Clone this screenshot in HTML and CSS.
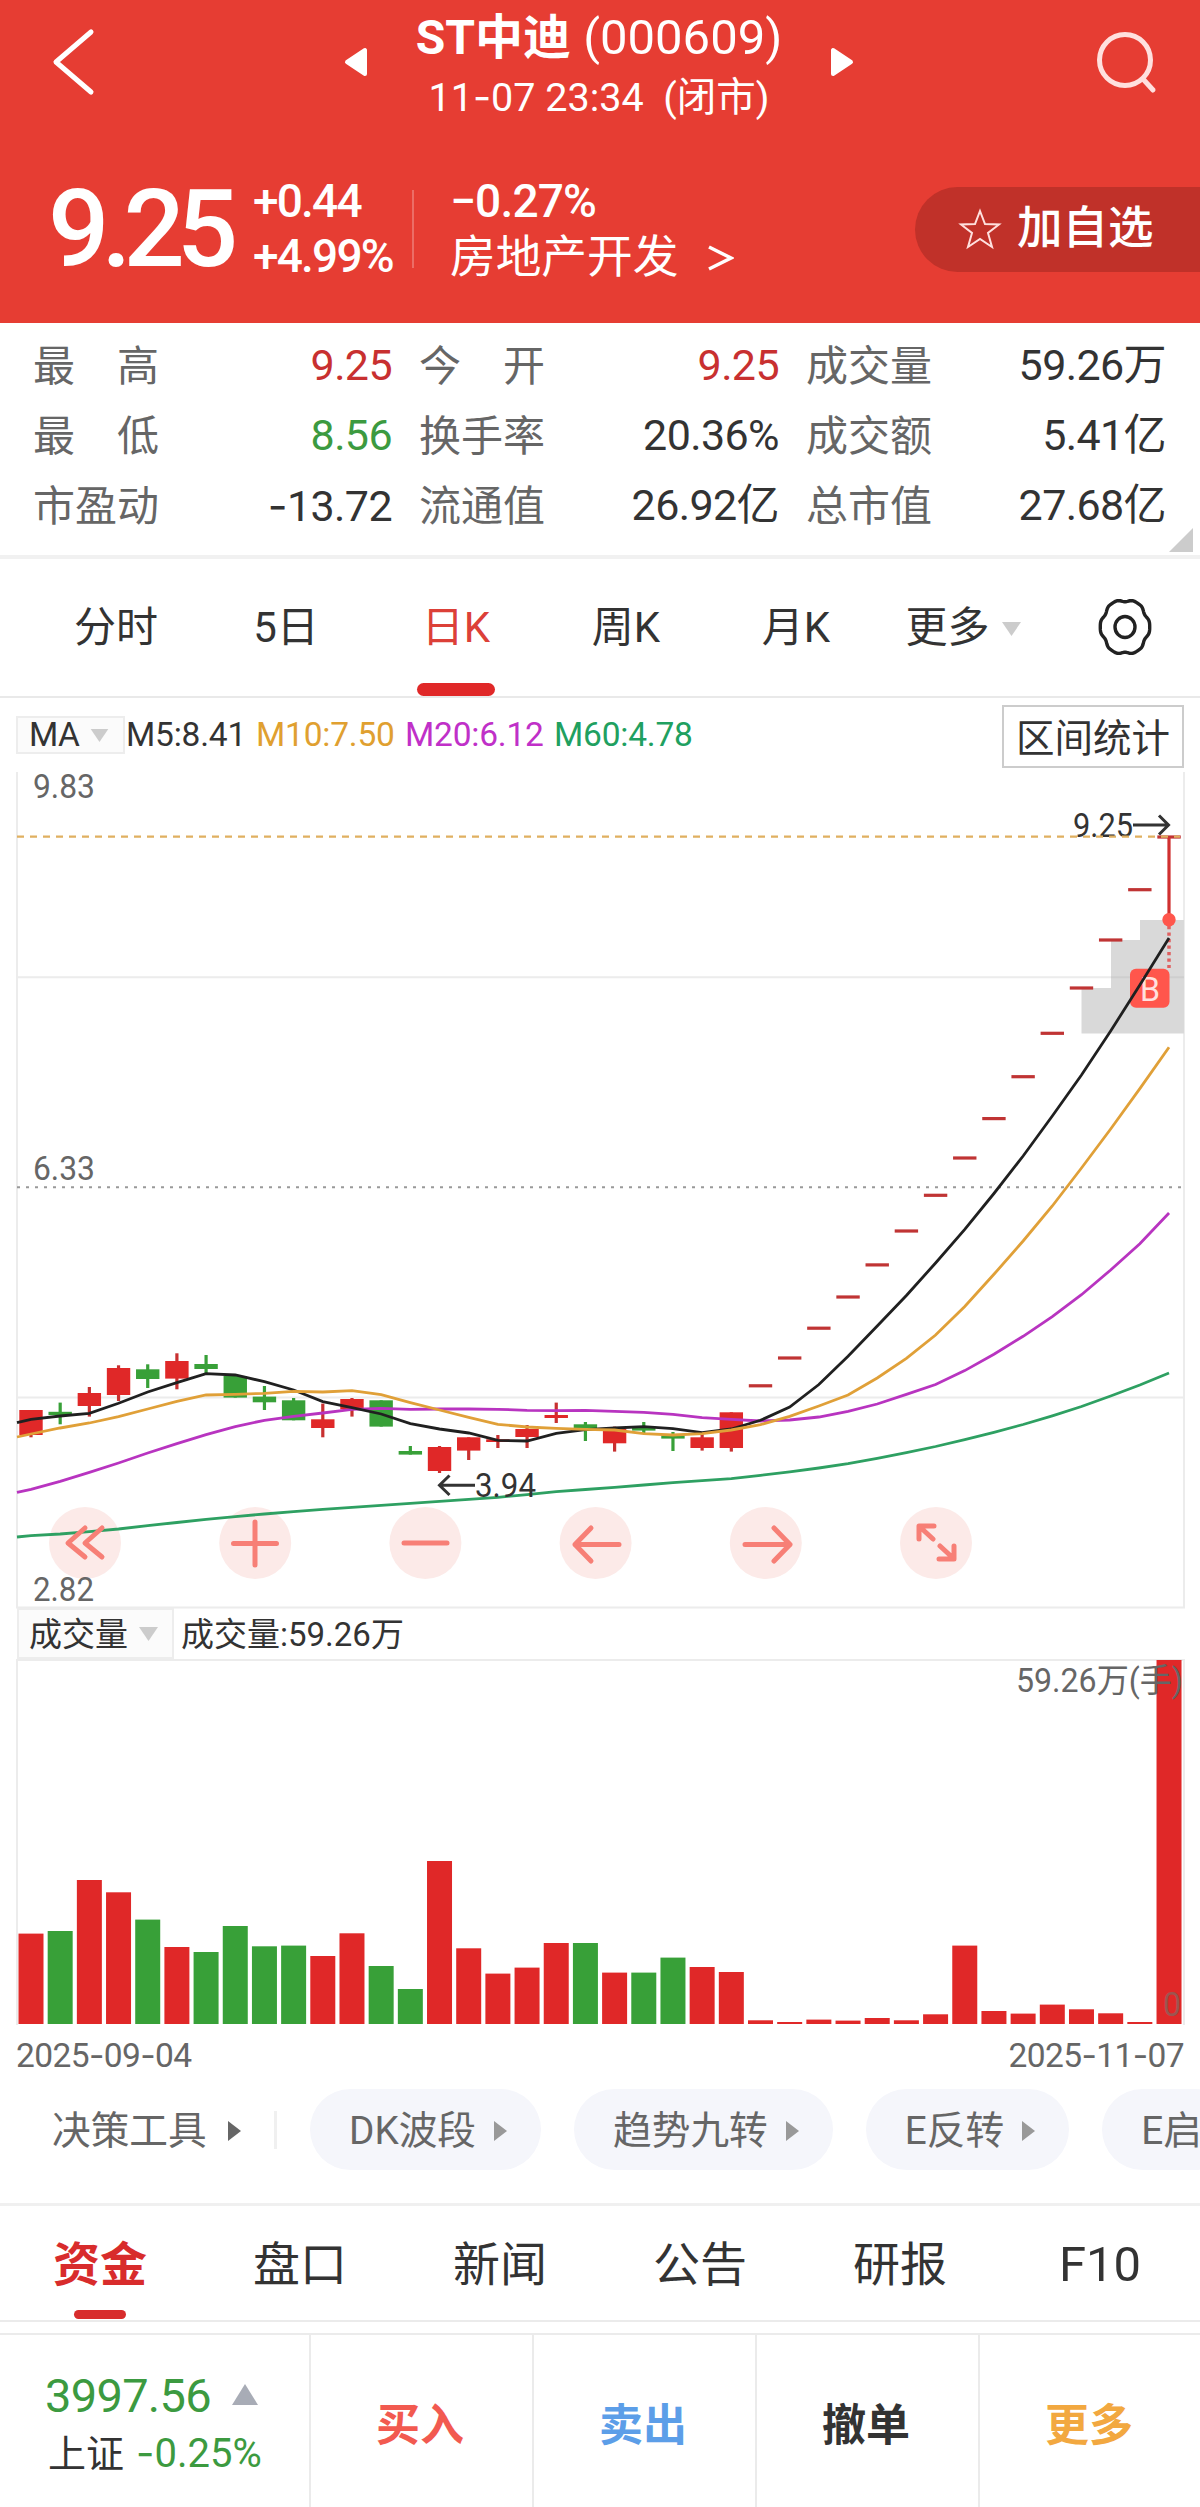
FILE: index.html
```html
<!DOCTYPE html>
<html lang="zh-CN">
<head>
    <meta charset="UTF-8">
    <meta name="viewport" content="width=device-width, initial-scale=1.0">
    <title>ST中迪 (000609)</title>
    <link rel="stylesheet" href="styles.css">
</head>
<body>
    <header class="header">
        <div class="title-bar">
            <svg class="icon-back" width="48" height="72" viewBox="0 0 48 72"><path d="M41 6L6 36L41 66"/></svg>
            <svg class="icon-arrow" width="24" height="30" viewBox="0 0 24 30"><path d="M21 3V27L3 15Z"/></svg>
            <div class="title">
                <h1><b>ST中迪</b> (000609)</h1>
                <p>11<i class="dash">-</i>07 23:34&nbsp; (闭市)</p>
            </div>
            <svg class="icon-arrow" width="24" height="30" viewBox="0 0 24 30"><path d="M3 3V27L21 15Z"/></svg>
            <svg class="icon-search" width="64" height="64" viewBox="0 0 64 64"><circle cx="30" cy="30" r="25.5"/><path d="M48 49L58 60"/></svg>
        </div>
        <div class="quote">
            <div class="price">9.25</div>
            <div class="change">
                <span>+0.44</span>
                <span>+4.99%</span>
            </div>
            <div class="sector">
                <span class="num">−0.27%</span>
                <span>房地产开发<svg width="26" height="26" viewBox="0 0 26 26"><path d="M1 2L23 13L1 24"/></svg></span>
            </div>
            <div class="add-fav">
                <svg width="44" height="42" viewBox="0 0 44 42"><path d="M22 3L27 16L41 16.500L30 25L34 39L22 31L10 39L14 25L3 16.500L17 16Z"/></svg>
                加自选
            </div>
        </div>
    </header>

    <section class="stats">
        <div class="stat"><label><span>最</span><span>高</span></label><span class="value up">9.25</span></div>
        <div class="stat"><label><span>今</span><span>开</span></label><span class="value up">9.25</span></div>
        <div class="stat"><label>成交量</label><span class="value">59.26万</span></div>
        <div class="stat"><label><span>最</span><span>低</span></label><span class="value down">8.56</span></div>
        <div class="stat"><label>换手率</label><span class="value">20.36%</span></div>
        <div class="stat"><label>成交额</label><span class="value">5.41亿</span></div>
        <div class="stat"><label>市盈动</label><span class="value"><i class="dash">-</i>13.72</span></div>
        <div class="stat"><label>流通值</label><span class="value">26.92亿</span></div>
        <div class="stat"><label>总市值</label><span class="value">27.68亿</span></div>
        <svg class="corner" width="24" height="24" viewBox="0 0 24 24"><path d="M24 0V24H0Z"/></svg>
    </section>

    <nav class="period-tabs">
        <a>分时</a>
        <a>5日</a>
        <a class="active">日K</a>
        <a>周K</a>
        <a>月K</a>
        <a>更多<svg class="caret" width="19" height="14" viewBox="0 0 19 14"><path d="M0 0H19L9.500 14Z"/></svg></a>
        <a><svg class="gear" width="56" height="56" viewBox="-28 -28 56 56"><path id="gear-path"/><ellipse rx="10" ry="10.500"/></svg></a>
    </nav>

    <section class="ma-bar">
        <div class="select">MA<svg class="caret" width="19" height="13" viewBox="0 0 19 14"><path d="M0 0H19L9.500 14Z"/></svg></div>
        <span class="ma5">M5:8.41</span>
        <span class="ma10">M10:7.50</span>
        <span class="ma20">M20:6.12</span>
        <span class="ma60">M60:4.78</span>
        <div class="range-btn">区间统计</div>
    </section>

    <svg class="chart" id="kline" width="1200" height="836" viewBox="0 772 1200 836"></svg>

    <section class="vol-bar">
        <div class="select">成交量<svg class="caret" width="19" height="14" viewBox="0 0 19 14"><path d="M0 0H19L9.500 14Z"/></svg></div>
        <span>成交量:59.26万</span>
    </section>

    <svg class="chart" id="volume" width="1200" height="366" viewBox="0 1659 1200 366"></svg>

    <div class="dates">
        <span>2025<i class="dash">-</i>09<i class="dash">-</i>04</span>
        <span>2025<i class="dash">-</i>11<i class="dash">-</i>07</span>
    </div>

    <div class="tools">
        <div class="tools-title">决策工具<svg width="13" height="20" viewBox="0 0 13 20"><path d="M0 0L13 10L0 20Z"/></svg></div>
        <div class="pill">DK波段<svg width="13" height="20" viewBox="0 0 13 20"><path d="M0 0L13 10L0 20Z"/></svg></div>
        <div class="pill">趋势九转<svg width="13" height="20" viewBox="0 0 13 20"><path d="M0 0L13 10L0 20Z"/></svg></div>
        <div class="pill">E反转<svg width="13" height="20" viewBox="0 0 13 20"><path d="M0 0L13 10L0 20Z"/></svg></div>
        <div class="pill">E启</div>
    </div>

    <nav class="info-tabs">
        <a class="active">资金</a>
        <a>盘口</a>
        <a>新闻</a>
        <a>公告</a>
        <a>研报</a>
        <a class="latin">F10</a>
    </nav>

    <footer class="bottom-bar">
        <div class="index">
            <div class="index-value">3997.56<svg width="26" height="21" viewBox="0 0 26 21"><path d="M13 0L26 21H0Z"/></svg></div>
            <div class="index-name">上证<span><i class="dash">-</i>0.25%</span></div>
        </div>
        <div class="action buy">买入</div>
        <div class="action sell">卖出</div>
        <div class="action cancel">撤单</div>
        <div class="action more">更多</div>
    </footer>

    <script>
        const RED = '#e02828';
        const GREEN = '#38a038';
        const STEP = 29.18;
        const cx = i => 31 + STEP * i;

        // [color, body top, body bottom, wick top, wick bottom]
        const candles = [
            ['r', 1410, 1435, 1410, 1437.3], ['g', 1411.8, 1415, 1402.6, 1424.3], ['r', 1393, 1406, 1387, 1416.6],
            ['r', 1368, 1395, 1365.3, 1401], ['g', 1369.3, 1379, 1364.3, 1388], ['r', 1361, 1378.6, 1353.3, 1389.3],
            ['g', 1364, 1369, 1355, 1374], ['g', 1376, 1397.6, 1376, 1397.6], ['g', 1396.6, 1402.3, 1386, 1410],
            ['g', 1400.3, 1420.3, 1398, 1420.3], ['r', 1419.3, 1428, 1403.6, 1437.3], ['r', 1399, 1409.3, 1398, 1416.6],
            ['g', 1400.3, 1426.6, 1400.3, 1426.6], ['g', 1451, 1454.6, 1446, 1454.6], ['r', 1447, 1471, 1446, 1473],
            ['r', 1437.3, 1450.6, 1437.3, 1460], ['r', 1439.3, 1442, 1435, 1448], ['r', 1429, 1437, 1425, 1448],
            ['r', 1415, 1418, 1402.6, 1423], ['g', 1424.3, 1428, 1422, 1441], ['r', 1429, 1443.3, 1426.6, 1451.6],
            ['g', 1427.3, 1430.6, 1422, 1433.3], ['g', 1435.3, 1438.6, 1432, 1451], ['r', 1437.3, 1448, 1434.3, 1450.6],
            ['r', 1412.3, 1448, 1412.3, 1451.6]
        ];
        // one-price limit-up days
        const limitUps = [1385.8, 1358, 1328.2, 1297, 1264.9, 1231, 1195.3, 1158, 1118.6, 1076.7, 1033.3, 988, 940, 889.7, 837];

        const lines = {
            '#2ea062': [1537, 1535.6, 1534, 1531.6, 1529, 1525.6, 1522.5, 1519.3, 1516.6, 1514, 1511.6, 1509.3, 1507.3, 1505.3, 1503.3, 1501.3, 1499.3, 1497.3, 1494.6, 1491.6, 1489.5, 1487.3, 1485, 1482.6, 1480.6, 1478.6, 1475.3, 1471.8, 1468, 1463.7, 1458.3, 1452.7, 1446.5, 1439.6, 1432.3, 1424.5, 1415.8, 1406.5, 1396, 1385, 1373],
            '#b834c0': [1492.3, 1489.3, 1481.3, 1472.3, 1463, 1453, 1443.6, 1434.6, 1426.6, 1420.3, 1416.3, 1413, 1409.3, 1408.3, 1409.3, 1409, 1409, 1409.3, 1410.3, 1410.6, 1410.3, 1411.3, 1412.3, 1414.3, 1417.6, 1419.3, 1421, 1420, 1417, 1411.4, 1404, 1394.3, 1384.5, 1370.6, 1354.3, 1336.3, 1316.7, 1294.7, 1270, 1243.7, 1213],
            '#202020': [1422.6, 1419.3, 1416, 1413.3, 1403.3, 1392, 1382.6, 1373.6, 1375, 1381.6, 1390, 1401.6, 1407.6, 1414, 1423.6, 1429, 1433, 1440.3, 1441, 1433.3, 1429.6, 1428, 1426.6, 1428.6, 1432.6, 1429, 1420.3, 1407, 1384.5, 1356.3, 1326, 1295.5, 1263, 1229.4, 1193.5, 1156, 1116, 1075, 1031, 985, 938],
            '#e0a038': [1437, 1434, 1428, 1423, 1416.6, 1409, 1401.3, 1395, 1394.3, 1393.3, 1391.3, 1392, 1390.6, 1394.6, 1402.6, 1410, 1417.3, 1424.3, 1427, 1428.3, 1429.3, 1430, 1433.6, 1435, 1433.6, 1430, 1424.6, 1416.3, 1406, 1395, 1378, 1358.4, 1335, 1306.5, 1274.3, 1241, 1206, 1168, 1129, 1088.6, 1047.3]
        };

        // volume bar tops, base line is 2024
        const volumes = [
            'r1933.6', 'g1931', 'r1880', 'r1892.3', 'g1919.6', 'r1947', 'g1952', 'g1926', 'g1946.3', 'g1945.6',
            'r1956', 'r1933.3', 'g1966', 'g1989', 'r1861', 'r1948.3', 'r1973.6', 'r1967.6', 'r1943', 'g1943',
            'r1972.6', 'g1972.6', 'g1957.6', 'r1967', 'r1972', 'r2020.3', 'r2022', 'r2019.6', 'r2020.6', 'r2018',
            'r2020.3', 'r2014.3', 'r1945.6', 'r2011', 'r2013.6', 'r2004.6', 'r2009.3', 'r2013.3', 'r2022', 'r1660'
        ];

        const rect = (x, y, w, h, fill) => `<rect x="${x}" y="${y}" width="${w}" height="${h}" fill="${fill}"/>`;
        const label = (x, y, len, text, cls = 'axis') =>
            `<text x="${x}" y="${y}" class="${cls}" textLength="${len}" lengthAdjust="spacingAndGlyphs">${text}</text>`;

        function drawKline() {
            let s = '';
            const icons = [
                'M85 1528L68 1543L85 1557M102 1528L85 1543L102 1557',
                'M233.500 1543.500H276.500M255 1522V1565',
                'M404 1543H447',
                'M575 1544.500H619M591 1528L575 1544.500L591 1561',
                'M745 1544.500H790M774 1528L790 1544.500L774 1561',
                'M919 1539V1526H934M920 1527L933 1539M954 1546V1559H939M940 1546L953 1558'
            ];
            // button discs go under the chart lines
            icons.forEach((d, i) => {
                s += `<circle cx="${85 + i * 170.2}" cy="1543" r="36" class="ctrl"/>`;
            });
            s += '<path class="frame" d="M17 772V1607.500H1184V772M17 1397.500H1184M17 977.300H1184"/>';
            s += '<path class="volume-area" d="M1081.500 1033.500V988H1111V940H1140V920H1184V1033.500Z"/>';
            s += '<path class="area-line" d="M1111 977.300H1184"/>';
            s += '<path class="mid-line" d="M17 1187.300H1184"/>';
            s += '<rect x="1130" y="968.700" width="39.500" height="39" rx="6" fill="#ff564c"/>';
            s += label(1140, 1001, 20, 'B', 'buy-mark');

            candles.forEach(([c, top, bottom, high, low], i) => {
                const fill = c === 'r' ? RED : GREEN;
                s += rect(cx(i) - 1.6, high, 3.2, low - high, c === 'r' ? '#c83030' : GREEN);
                s += rect(cx(i) - 11.7, top, 23.4, bottom - top, fill);
            });
            limitUps.forEach((y, i) => {
                s += rect(cx(i + 25) - 11.7, y - 1.6, 23.4, 3.2, '#c03434');
            });
            s += rect(1167.4, 837, 3.2, 80, '#d03030');
            s += '<path class="cost-line" d="M1169 926V968"/>';
            s += '<circle cx="1169" cy="919.700" r="6.700" fill="#ff564c"/>';

            for (const color in lines) {
                const pts = lines[color].map((y, i) => `${i === 0 ? 17 : cx(i - 1)},${y}`).join(' ');
                s += `<polyline points="${pts}" fill="none" stroke="${color}" stroke-width="2.800"/>`;
            }

            s += label(1073, 837, 60, '9.25', 'mark');
            s += '<path class="mark-arrow" d="M1133 825H1168M1159 815.500L1168.500 825L1159 834.500"/>';
            s += '<path class="last-line" d="M17 836.700H1180"/>';
            s += label(475, 1497, 61, '3.94', 'mark');
            s += '<path class="mark-arrow" d="M475 1485.300H440M449.500 1475.500L439.500 1485.300L449.500 1495"/>';

            s += label(33, 798, 62, '9.83') + label(33, 1180, 62, '6.33') + label(33, 1601, 61, '2.82');
            icons.forEach(d => s += `<path class="ctrl-icon" d="${d}"/>`);
            document.getElementById('kline').innerHTML = s;
        }

        function drawVolume() {
            let s = '<path class="frame" d="M17 2025V1660H1184V2025"/>';
            volumes.forEach((v, i) => {
                const y = Number(v.slice(1));
                s += rect(cx(i) - 12.5, y, 25, 2024 - y, v[0] === 'r' ? RED : GREEN);
            });
            s += label(1016, 1692, 167, '59.26万(手)', 'axis vol-max') + label(1163, 2016, 18, '0', 'axis zero');
            document.getElementById('volume').innerHTML = s;
        }

        // gear outline: six-lobed wave, slightly taller than wide
        function drawGear() {
            let d = '';
            for (let a = 0; a < 360; a += 3) {
                const t = a * Math.PI / 180;
                const r = 24 - 1.1 * Math.cos(6 * t) - 0.4 * Math.cos(12 * t);
                d += (a ? 'L' : 'M') + (r * Math.sin(t)).toFixed(2) + ' ' + (-1.12 * r * Math.cos(t)).toFixed(2);
            }
            document.getElementById('gear-path').setAttribute('d', d + 'Z');
        }

        drawKline();
        drawVolume();
        drawGear();
    </script>
</body>
</html>
```

FILE: styles.css
```css
* {
    box-sizing: border-box;
}

body {
    margin: 0;
    width: 1200px;
    height: 2507px;
    overflow: hidden;
    background-color: #fff;
    color: #333;
    font-family: Roboto, "Noto Sans CJK SC", sans-serif;
    line-height: 1.2;
}

svg {
    display: block;
    flex-shrink: 0;
}

.dash {
    font-family: Inter, sans-serif;
    font-style: normal;
}

.up {
    color: #c83030;
}

.down {
    color: #3c9a40;
}

/* header */
.header {
    height: 323px;
    background-color: #e63d33;
    color: #fff;
}

.title-bar {
    display: flex;
    align-items: center;
    height: 124px;
    padding: 0 41px 0 50px;
}

.icon-back,
.icon-search {
    fill: none;
    stroke: #fff;
    stroke-width: 5;
    stroke-linecap: round;
    stroke-linejoin: round;
}

.icon-search {
    stroke: #ffe0de;
    margin-left: auto;
}

.icon-back {
    margin-right: 246px;
}

.icon-arrow {
    fill: #fff;
    stroke: #fff;
    stroke-width: 4;
    stroke-linejoin: round;
}

.title {
    width: 462px;
    padding-top: 10px;
    text-align: center;
}

.title h1 {
    margin: 0;
    font-size: 49px;
    font-weight: 400;
    line-height: 60px;
}

.title h1 b {
    font-weight: 700;
    font-size: 48px;
}

.title p {
    margin: 0;
    font-size: 39.5px;
    line-height: 58px;
}

.quote {
    display: flex;
    align-items: center;
    height: 156px;
    margin-top: 27px;
    padding-left: 48px;
}

.price {
    width: 203px;
    font-size: 108px;
    font-weight: 500;
    letter-spacing: -8px;
    line-height: 150px;
}

.change,
.sector {
    display: flex;
    flex-direction: column;
    font-size: 46px;
    font-weight: 500;
    letter-spacing: -1.8px;
    line-height: 55px;
}

.change {
    width: 162px;
    height: 110px;
    padding-left: 2px;
}

.sector {
    position: relative;
    height: 110px;
    padding-left: 37px;
}

.sector::before {
    content: "";
    position: absolute;
    left: -1px;
    top: 16px;
    width: 2px;
    height: 78px;
    background-color: rgba(255, 255, 255, 0.25);
}

.sector .num {
    letter-spacing: -0.8px;
}

.sector span + span {
    display: flex;
    align-items: center;
    font-size: 45.7px;
    font-weight: 400;
    letter-spacing: 0;
    line-height: 57px;
}

.sector svg {
    margin-left: 30px;
    fill: none;
    stroke: #fff;
    stroke-width: 3.5;
}

.add-fav {
    display: flex;
    align-items: center;
    width: 285px;
    height: 85px;
    margin-left: auto;
    padding-left: 43px;
    border-radius: 43px 0 0 43px;
    background-color: #c03129;
    font-size: 45.5px;
    font-weight: 500;
}

.add-fav svg {
    margin-right: 15px;
    fill: none;
    stroke: #ffe0de;
    stroke-width: 2;
}

/* stats */
.stats {
    position: relative;
    display: grid;
    grid-template-columns: 359px 360px 360px;
    grid-auto-rows: 70px;
    column-gap: 27px;
    height: 236px;
    padding: 8px 0 0 33px;
    border-bottom: 4px solid #f1f1f1;
}

.stat {
    display: flex;
    align-items: center;
    justify-content: space-between;
}

.stat label {
    display: flex;
    justify-content: space-between;
    width: 126px;
    padding-top: 2px;
    font-size: 42px;
    color: #666;
}

.stat .value {
    font-size: 43px;
    letter-spacing: -0.6px;
}

.corner {
    position: absolute;
    right: 7px;
    bottom: 3px;
    fill: #ccc;
}

/* period tabs */
.period-tabs {
    display: grid;
    grid-template-columns: repeat(6, 170px) 1fr;
    height: 139px;
    padding-left: 31px;
    border-bottom: 2px solid #e9e9e9;
    font-size: 42px;
}

.period-tabs a {
    position: relative;
    display: flex;
    align-items: center;
    justify-content: center;
    padding-top: 2px;
}

.period-tabs .active {
    color: #dc4038;
}

.period-tabs .active::after {
    content: "";
    position: absolute;
    bottom: 0;
    width: 78px;
    height: 13px;
    border-radius: 7px;
    background-color: #e02828;
}

.caret {
    margin-left: 13px;
    fill: #ccc;
}

.period-tabs .caret {
    margin-left: 12px;
    margin-right: 6px;
}

.gear {
    margin-right: 2px;
    margin-bottom: 3px;
    fill: none;
    stroke: #222;
    stroke-width: 3.4;
    stroke-linejoin: round;
}

/* moving averages */
.ma-bar {
    display: flex;
    align-items: center;
    height: 74px;
    padding: 0 16px;
    font-size: 33.5px;
    white-space: nowrap;
}

.select {
    display: flex;
    align-items: center;
    border: 2px solid #ededed;
    background-color: #fbfbfb;
}

.ma-bar .select {
    width: 109px;
    height: 38px;
    padding-left: 11px;
    margin-right: 1px;
    letter-spacing: -0.5px;
}

.ma-bar .caret {
    margin-left: 11px;
}

.ma-bar span {
    width: 149px;
    letter-spacing: -0.2px;
}

.ma-bar .ma5 {
    width: 130px;
}

.ma10 {
    color: #e0a030;
}

.ma20 {
    color: #c030c8;
}

.ma60 {
    color: #20a060;
}

.range-btn {
    margin-left: auto;
    margin-top: 2px;
    width: 182px;
    height: 63px;
    border: 2px solid #ccc;
    font-size: 38.5px;
    line-height: 64px;
    text-align: center;
}

/* charts */
.chart {
    overflow: visible;
}

.frame {
    fill: none;
    stroke: #ececec;
    stroke-width: 2;
}

.area-line {
    stroke: #cecece;
    stroke-width: 2;
}

.mid-line {
    stroke: #999;
    stroke-width: 2;
    stroke-dasharray: 3 6;
}

.last-line {
    stroke: #e0b060;
    stroke-width: 2.2;
    stroke-dasharray: 7 6;
}

.volume-area {
    fill: #d9d9d9;
}

.cost-line {
    stroke: #e06060;
    stroke-width: 3.5;
    stroke-dasharray: 3.3 3.2;
}

.axis {
    fill: #666;
    font-size: 34px;
}

.vol-max {
    font-size: 33px;
}

.zero {
    fill: #9c5550;
}

.mark {
    fill: #333;
    font-size: 34px;
}

.mark-arrow {
    fill: none;
    stroke: #333;
    stroke-width: 3;
}

.buy-mark {
    fill: #ffe0de;
    font-size: 34px;
}

.ctrl {
    fill: #fceae8;
}

.ctrl-icon {
    fill: none;
    stroke: #f77f76;
    stroke-width: 5;
    stroke-linecap: round;
    stroke-linejoin: round;
}

/* volume header */
.vol-bar {
    display: flex;
    align-items: center;
    height: 51px;
    padding-left: 17px;
    font-size: 33px;
}

.vol-bar span {
    padding-top: 2px;
}

.vol-bar .select {
    width: 157px;
    height: 51px;
    padding-top: 2px;
    padding-left: 10px;
    margin-right: 7px;
}

.vol-bar .caret {
    margin-left: 11px;
    margin-bottom: 2px;
}

.dates {
    display: flex;
    justify-content: space-between;
    height: 62px;
    padding: 0 16px;
    font-size: 33.5px;
    line-height: 61px;
    letter-spacing: -0.6px;
    color: #666;
}

/* tools */
.tools {
    display: flex;
    align-items: center;
    height: 119px;
    padding: 0 0 31px 52px;
    overflow: hidden;
    border-bottom: 3px solid #f0f0f0;
    font-size: 38.7px;
    line-height: 50px;
    color: #666;
    white-space: nowrap;
}

.tools-title {
    display: flex;
    align-items: center;
    flex-shrink: 0;
    width: 225px;
    height: 38px;
    margin-right: 33px;
    padding-top: 2px;
    border-right: 3px solid #f0f0f0;
}

.tools-title svg {
    margin-left: 21px;
    fill: #666;
}

.pill {
    display: flex;
    align-items: center;
    flex-shrink: 0;
    height: 81px;
    margin-right: 33px;
    padding: 2px 34px 0 39px;
    border-radius: 41px;
    background-color: #f5f6fb;
}

.pill svg {
    margin-left: 18px;
    fill: #999;
}

/* info tabs */
.info-tabs {
    display: grid;
    grid-template-columns: repeat(6, 200px);
    height: 116px;
    border-bottom: 2px solid #ebebeb;
    font-size: 47px;
}

.info-tabs a {
    position: relative;
    display: flex;
    align-items: center;
    justify-content: center;
    padding-top: 4px;
}

.info-tabs .active {
    color: #d82c2c;
    font-weight: 700;
}

.info-tabs .active::after {
    content: "";
    position: absolute;
    bottom: 1px;
    width: 52px;
    height: 9px;
    border-radius: 5px;
    background-color: #d82c2c;
}

.info-tabs .latin {
    font-size: 49px;
}

/* bottom bar */
.bottom-bar {
    display: grid;
    grid-template-columns: 309px repeat(4, 223px);
    height: 174px;
    margin-top: 11px;
    border-top: 2px solid #ebebeb;
}

.index {
    padding: 32px 0 0 45px;
}

.index-value {
    display: flex;
    align-items: center;
    font-size: 47px;
    line-height: 58px;
    letter-spacing: -0.7px;
    color: #3c9a40;
}

.index-value svg {
    margin-left: 21px;
    margin-bottom: 3px;
    fill: #a8acb6;
}

.index-name {
    display: flex;
    align-items: center;
    padding-left: 3px;
    font-size: 38px;
    line-height: 56px;
}

.index-name span {
    margin-left: 12px;
    font-size: 40px;
    color: #3c9a40;
}

.action {
    display: flex;
    align-items: center;
    justify-content: center;
    padding: 10px 3px 0 0;
    border-left: 2px solid #ebebeb;
    font-size: 44px;
    font-weight: 700;
}

.buy {
    color: #f25a50;
}

.sell {
    color: #5c9ee8;
}

.more {
    color: #f2a840;
}
```
